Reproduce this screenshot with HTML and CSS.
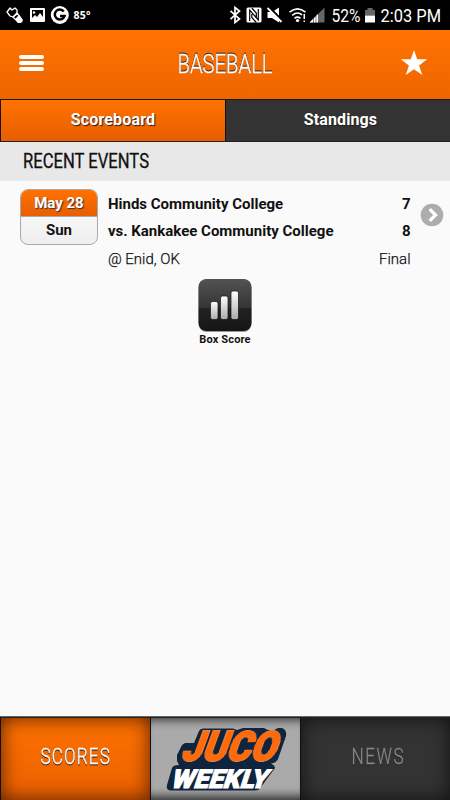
FILE: index.html
```
<!DOCTYPE html>
<html lang="en">
<head>
<meta charset="utf-8">
<title>Baseball</title>
<link rel="stylesheet" href="styles.css">
</head>
<body>
<div class="app">
  <div class="status">
    <svg width="450" height="30" viewBox="0 0 450 30">
      <g fill="none" stroke="#fff" stroke-width="1.3" stroke-linejoin="round">
        <path d="M7 12L10 8L12 10L15 8L17 10L17 14L13 17L10 16Z"/>
        <path d="M13 17L17 13L22 20Q22 23 18 22Z" />
        <path d="M16 19L19 16L22 20Q22 23 18 22Z" fill="#fff"/>
      </g>
      <path fill="#fff" fill-rule="evenodd" d="M31 8H44Q45 8 45 9V21Q45 22 44 22H31Q30 22 30 21V9Q30 8 31 8ZM32 10V18L35 15L37 17L40 13L43 17V10Z"/>
      <circle cx="34" cy="12.5" r="1.2" fill="#fff"/>
      <circle cx="59.8" cy="15" r="9" fill="#fff"/>
      <path d="M63.8 11.500A5 5 0 1 0 64.600 16H60" fill="none" stroke="#000" stroke-width="2.500"/>
      <text class="temp" x="73.5" y="18.5" textLength="17">85°</text>
      <path d="M230.5 10.8L239.5 19L235 22.5V7.5L239.5 11L230.5 19.2" fill="none" stroke="#fff" stroke-width="1.7"/>
      <path d="M248 7.5H260Q261.500 7.500 261.500 9V21Q261.500 22.500 260 22.500H248Q246.500 22.500 246.500 21V9Q246.500 7.500 248 7.500Z" fill="#fff"/>
      <path d="M249.700 21V10L258.300 20V9M251.800 8L256.300 13V17M256.300 22.500L251.800 17.500V14" fill="none" stroke="#000" stroke-width="1.200"/>
      <path d="M267.500 12H272L279 7.500V22.500L272 18H267.500Z" fill="#fff"/>
      <path d="M269 7L283 21.500" stroke="#000" stroke-width="2.500"/>
      <path d="M267.500 8L281.500 22" stroke="#fff" stroke-width="1.800"/>
      <g fill="none" stroke="#fff" stroke-width="1.600">
        <path d="M289.500 12.200Q297.500 5.500 305.500 12.200M292.200 15.300Q297.500 11 302 14.800M294.500 18.300Q297.500 16 300.500 18.300"/>
      </g>
      <circle cx="297.500" cy="20.500" r="1.600" fill="#fff"/>
      <path d="M303.500 14H305V19H303.500ZM303.500 20.500H305V22H303.500Z" fill="#fff"/>
      <path d="M309.500 22.500L324.500 7.500V22.500Z" fill="#666"/>
      <path d="M309.500 22.500L318 14V22.500Z" fill="#fff"/>
      <path d="M313.500 18V23M316 16V23" stroke="#000" stroke-width=".5"/>
      <text class="stat" x="331.500" y="22" textLength="29" lengthAdjust="spacingAndGlyphs">52%</text>
      <path d="M367.500 8H372.500V10H375V15.500H365V10H367.500Z" fill="#666"/>
      <path d="M365 15.500H375V22.500H365Z" fill="#fff"/>
      <text class="stat" x="380.500" y="22" textLength="60.500" lengthAdjust="spacingAndGlyphs">2:03 PM</text>
    </svg>
  </div>

  <header class="header">
    <div class="menu"><i></i><i></i><i></i></div>
    <svg class="title" width="110" height="40"><text class="cond" x="8.500" y="29" textLength="95" lengthAdjust="spacingAndGlyphs">BASEBALL</text></svg>
    <svg class="star" width="28" height="27" viewBox="0 0 28 27"><path fill="#fff" d="M14 0L17.200 9.300H27.200L19.100 15.400L22.300 25L14 19.200L5.700 25L8.900 15.400L.8 9.300H10.800Z"/></svg>
  </header>

  <nav class="tabs">
    <div class="tab active">Scoreboard</div>
    <div class="tab right">Standings</div>
  </nav>

  <h2 class="section"><svg width="140" height="39"><text class="section-text" x="0" y="25.500" textLength="126" lengthAdjust="spacingAndGlyphs">RECENT EVENTS</text></svg></h2>

  <main class="main">
    <div class="event">
      <div class="date"><div class="day">May 28</div><div class="weekday">Sun</div></div>
      <div class="game">
        <div class="row"><b>Hinds Community College</b><b>7</b></div>
        <div class="row"><b>vs. Kankakee Community College</b><b>8</b></div>
        <div class="row light"><span>@ Enid, OK</span><span>Final</span></div>
      </div>
      <svg class="more" width="24" height="24" viewBox="0 0 24 24"><circle cx="12" cy="12" r="11.300" fill="#adadad"/><path d="M9.700 6.200L15.500 12L9.700 17.800" fill="none" stroke="#fff" stroke-width="3.300"/></svg>
    </div>
    <div class="box">
      <svg width="54" height="54" viewBox="0 0 54 54">
        <defs>
          <linearGradient id="tile" x2="0" y2="1"><stop stop-color="#535353"/><stop offset=".55" stop-color="#343434"/><stop offset=".57" stop-color="#222"/><stop offset="1" stop-color="#151515"/></linearGradient>
          <linearGradient id="bar" x2="0" y2="1"><stop stop-color="#fff"/><stop offset="1" stop-color="#aaa"/></linearGradient>
        </defs>
        <rect x=".5" y="1.500" width="53" height="52.500" rx="8" fill="#999"/>
        <rect x=".5" y="1" width="53" height="52" rx="8" fill="url(#tile)"/>
        <g fill="url(#bar)" stroke="#111" stroke-width=".7"><rect x="12.500" y="23.500" width="7.500" height="18" rx="2"/><rect x="22.500" y="18" width="7.500" height="23.500" rx="2"/><rect x="33" y="13" width="7.500" height="28.500" rx="2"/></g>
      </svg>
      <span class="box-label">Box Score</span>
    </div>
  </main>

  <footer class="footer">
    <div class="foot scores"><svg width="90" height="40"><g transform="translate(9.500 25) scale(.78 1)"><text class="cond foot-text" textLength="89">SCORES</text></g></svg></div>
    <div class="foot logo">
      <svg width="148" height="82" viewBox="152 717 148 82">
        <path d="M199 730Q200 727.500 203 727.500H233L237 729L243 727H264L268 729H274L278 727H282Q287 729 286 735L278 758Q276 762 271 762.500L274 764.500L275 767L261 786Q259 789.500 255 789.500H170Q166 789 167 784L172 767Q173 764 179 764L177 760V754L182 744L185 742H194Z" fill="#10243d"/>
        <g transform="translate(177.500 760) skewX(-20)"><text class="logo-text juco" x="2.500" y="0" textLength="94" lengthAdjust="spacingAndGlyphs">JUCO</text></g>
        <g transform="translate(169 786.500) skewX(-18)"><text class="logo-text weekly" x="1" y="0" textLength="96" lengthAdjust="spacingAndGlyphs">WEEKLY</text></g>
      </svg>
    </div>
    <div class="foot news"><svg width="80" height="40"><g transform="translate(15.500 25) scale(.78 1)"><text class="cond foot-text muted" textLength="67">NEWS</text></g></svg></div>
  </footer>
</div>
</body>
</html>
```
FILE: styles.css
```
* { box-sizing: border-box; }
body { margin: 0; font-family: Roboto, "Liberation Sans", sans-serif; color: #111; }
svg { display: block; overflow: visible; }
.app { width: 450px; height: 800px; display: flex; flex-direction: column; background: #fafafa; overflow: hidden; }
.status { height: 30px; background: #000; flex: none; }
.temp { font: bold 10.5px "Open Sans", sans-serif; fill: #fff; }
.stat { font: 19px Roboto, sans-serif; fill: #fff; }

.header { height: 69px; flex: none; display: flex; align-items: center; justify-content: space-between; padding: 0 22px 0 19px; background: linear-gradient(#ff7300, #ee6500); }
.menu { width: 25px; display: flex; flex-direction: column; gap: 2px; margin-top: -3px; margin-right: 3px; }
.menu i { height: 4.3px; border-radius: 2px; background: #fff; }
.title { margin-top: -2px; }
.star { margin-top: -3px; }
.cond { font: 300 25px Roboto, sans-serif; fill: #fff; stroke: #fff; stroke-width: .4px; filter: drop-shadow(0 -1px 0 #222); }

.tabs { height: 43px; flex: none; display: grid; grid-template-columns: 1fr 1fr; border-top: 1px solid #1d1611; border-bottom: 1px solid #222; }
.tab { display: flex; align-items: center; justify-content: center; padding-bottom: 2px; background: #333; border-left: 1px solid #101018; color: #fff; font-size: 16px; font-weight: 700; letter-spacing: .15px; text-shadow: 1px 1px 1px #222; }
.tab.right { padding-left: 5px; letter-spacing: .1px; }
.tab.active { background: linear-gradient(#ff7300, #e85d00); }

.section { height: 39px; flex: none; margin: 0; padding-left: 23px; background: #e8e8e8; }
.section-text { font: 400 20.5px Roboto, sans-serif; fill: #111; stroke: #111; stroke-width: .3px; }

.main { flex: 1; }
.event { display: flex; padding: 8px 6px 0 20px; }
.date { width: 78px; height: 56px; border: 1.5px solid #aaa; border-radius: 8px; overflow: hidden; text-align: center; font-size: 15px; font-weight: 700; line-height: 26px; background: linear-gradient(#fff, #eee); }
.day { height: 27px; color: #fff; background: linear-gradient(#ff7200, #e85e00); border-bottom: 1px solid #aaa; text-shadow: 1px 1px 1px #333; }
.weekday { line-height: 27px; }
.game { width: 303px; margin-left: 10px; padding-top: 1.5px; margin-right: 9.5px; }
.row { height: 27.5px; display: flex; justify-content: space-between; align-items: center; font-size: 15px; line-height: 27px; }
.row b { font-weight: 700; }
.light { font-weight: 300; -webkit-text-stroke: .25px #111; }
.more { margin-top: 14px; }
.box { display: flex; flex-direction: column; align-items: center; margin-top: 5px; }
.box-label { font-size: 11px; font-weight: 700; line-height: 14px; margin-top: 1px; letter-spacing: .15px; }

.footer { height: 84px; flex: none; display: grid; grid-template-columns: 150px 150px 150px; border-top: 1px solid #666; background: #333; padding-bottom: 1px; }
.foot { display: flex; align-items: center; justify-content: center; border-left: 1px solid #111; border-top: 1px solid #222; }
.scores { background: linear-gradient(#ff7200, #e96000); box-shadow: inset 0 0 19px #531f00; }
.logo { background: #aaa; box-shadow: inset 0 10px 10px -8px #333, inset 0 -12px 10px -8px #333; }
.news { background: #333; box-shadow: inset 0 0 19px #111; }
.foot-text { font-size: 22px; filter: drop-shadow(0 1px 0 #222); }
.muted { fill: #888; stroke: #888; stroke-width: .3px; }
.logo-text { font-family: Roboto, sans-serif; font-weight: 900; }
.juco { font-size: 41px; fill: #ff6a0b; stroke: #ff6a0b; stroke-width: 1.5px; filter: drop-shadow(0 0 .6px #fff); }
.weekly { font-size: 26px; fill: #fff; stroke: #fff; stroke-width: 1px; }
```
